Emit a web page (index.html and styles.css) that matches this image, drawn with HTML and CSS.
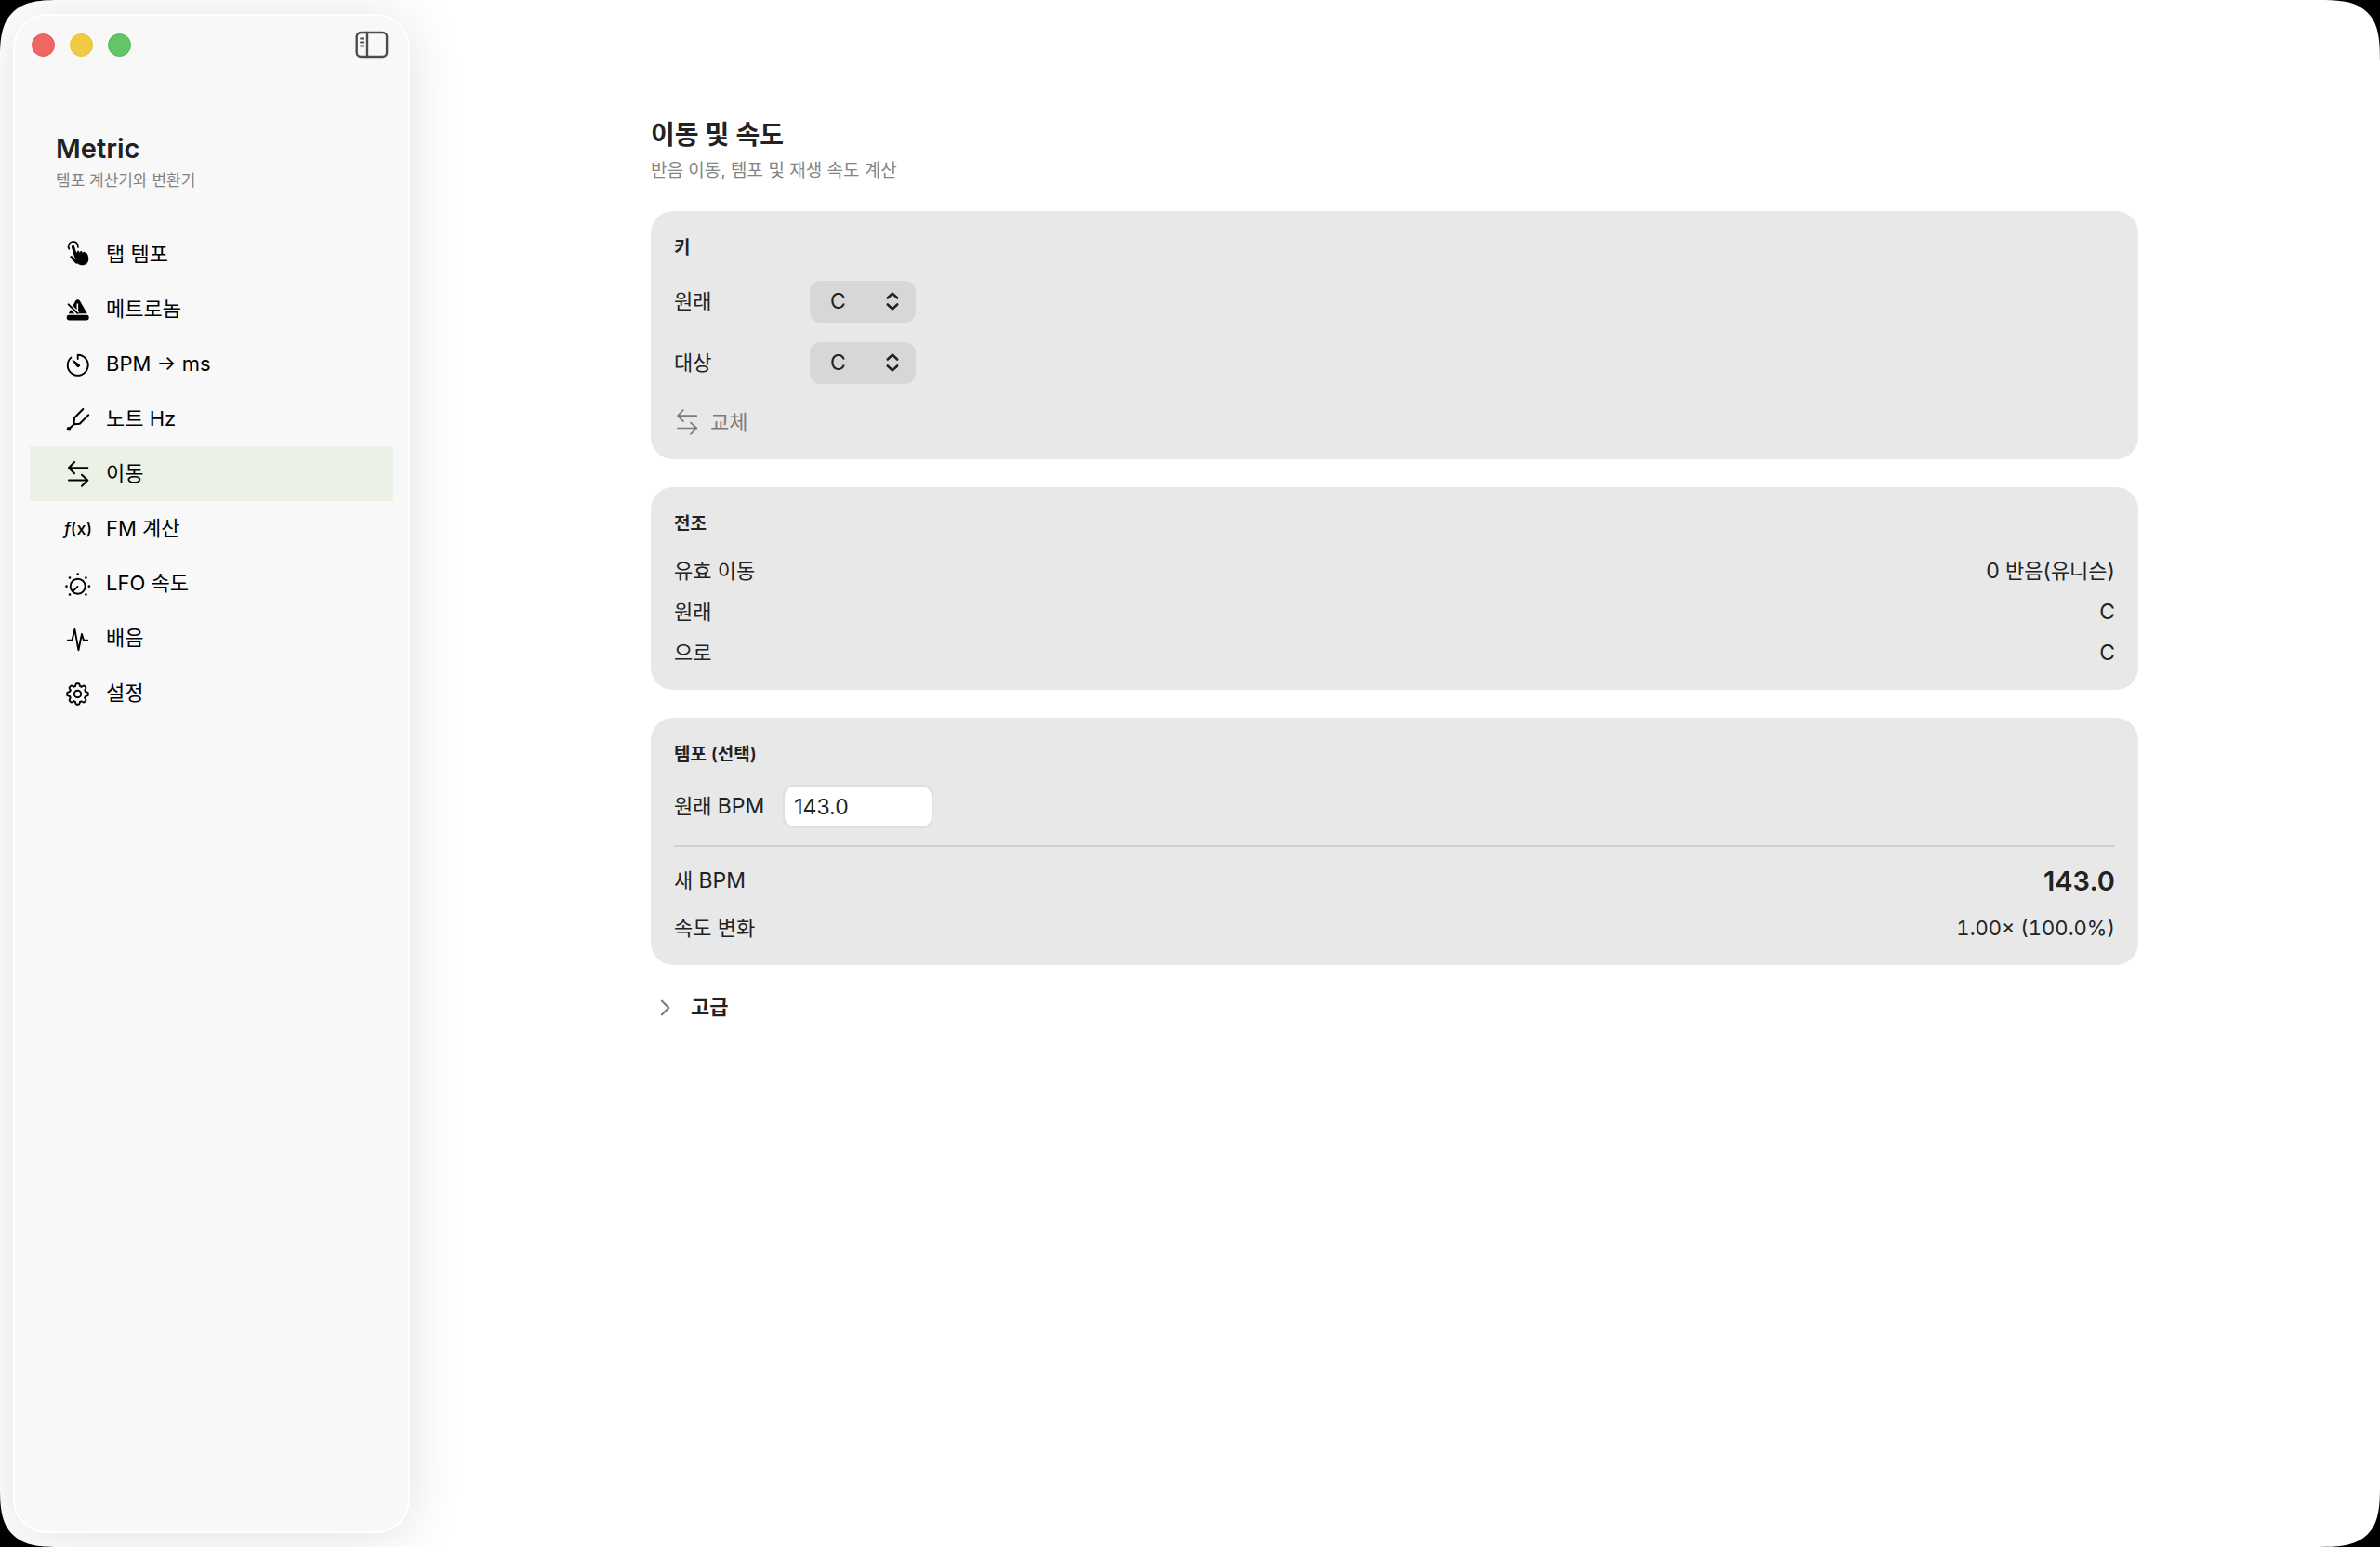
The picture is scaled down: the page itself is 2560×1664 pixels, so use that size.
FILE: index.html
```html
<!DOCTYPE html>
<html lang="ko">
<head>
<meta charset="utf-8">
<meta name="viewport" content="width=device-width, initial-scale=1">
<title>Metric</title>
<link rel="stylesheet" href="styles.css">
</head>
<body>
<div class="window">
  <aside class="sidebar">
    <div class="toolbar">
      <div class="lights">
        <button class="light light-close" type="button" aria-label="닫기"></button>
        <button class="light light-minimize" type="button" aria-label="최소화"></button>
        <button class="light light-zoom" type="button" aria-label="확대"></button>
      </div>
      <button class="toggle" type="button" aria-label="사이드바">
        <svg width="36" height="30" viewBox="0 0 36 30" fill="none" stroke="currentColor" stroke-width="2.4" stroke-linecap="round">
          <rect x="1.7" y="2" width="32.4" height="26" rx="4.5"/>
          <path d="M13 2v26"/>
          <path d="M6 8.500h3M6 12.500h3M6 16.500h3" stroke-width="1.8"/>
        </svg>
      </button>
    </div>
    <header class="brand">
      <h1 class="brand-name">Metric</h1>
      <p class="brand-note">템포 계산기와 변환기</p>
    </header>
    <nav class="nav">
      <a class="nav-item" href="#tap">
        <svg class="icon" viewBox="0 0 32 32" fill="none" stroke="currentColor" stroke-linecap="round" stroke-linejoin="round">
          <path d="M6.300 9.800A5.200 5.200 0 1 1 15.900 8" stroke-width="1.700"/>
          <path d="M10.500 7.500l3.600 12" stroke-width="3.200"/>
          <path d="M8.600 18.400l5.600 6" stroke-width="2.600"/>
          <path d="M13 15.500l2.200-3.300c.6-.8 1.600-.6 2 .2l.4 1.600.5-1.400c.7-1 1.900-.9 2.400.3l.4 1.600.4-1.200c.8-.9 2-.6 2.500.5l.3.700c.9-.4 1.700 0 2.100 1.100.7 1.800 1.300 4 1 6.100-.5 3.400-3.300 5.500-6.600 5.500-3.400 0-5.200-1.500-7.300-4z" fill="currentColor" stroke="none"/>
        </svg>
        <span>탭 템포</span>
      </a>
      <a class="nav-item" href="#metronome">
        <svg class="icon" viewBox="0 0 32 32" fill="currentColor">
          <rect x="3.700" y="21.800" width="24" height="5.700" rx="2.400"/>
          <path d="M5.800 20.300l7.200-13.300c1.200-2.200 4-2.200 5.200 0l7.600 13.300z"/>
          <path d="M15.300 18V9.500" stroke="#f8f8f8" stroke-width="1.600" fill="none"/>
          <path d="M4.500 9.300l11 11" stroke="#f8f8f8" stroke-width="4.600" fill="none"/>
          <path d="M5.600 10.300l9.600 9.600" stroke="currentColor" stroke-width="1.900" stroke-linecap="round"/>
        </svg>
        <span>메트로놈</span>
      </a>
      <a class="nav-item" href="#bpm-ms">
        <svg class="icon" viewBox="0 0 32 32" fill="none" stroke="currentColor" stroke-width="1.900" stroke-linecap="round" stroke-linejoin="round">
          <path d="M15.700 10V5.800a11 11 0 1 1-7.300 2.800"/>
          <path d="M10.300 11.200l6.800 4.800a1.500 1.500 0 0 1-2.300 2.200z" fill="currentColor" stroke-width="1"/>
        </svg>
        <span class="latin">BPM → ms</span>
      </a>
      <a class="nav-item" href="#note-hz">
        <svg class="icon" viewBox="0 0 32 32" fill="none" stroke="currentColor" stroke-width="2" stroke-linecap="round" stroke-linejoin="round">
          <path d="M21.300 5l-9.300 9.500-.5 6.700 6.200-.4 9.500-9.600M11.500 21.200L6 26.500"/>
          <circle cx="6" cy="26.300" r="1.300" fill="currentColor"/>
        </svg>
        <span>노트 <span class="latin">Hz</span></span>
      </a>
      <a class="nav-item is-active" href="#transpose" aria-current="page">
        <svg class="icon" viewBox="0 0 32 32" fill="none" stroke="currentColor" stroke-width="2" stroke-linecap="round" stroke-linejoin="round">
          <path d="M26.300 9.200H6M12 3L6 9.200l6 6M6 22.500h20.300M20 16.700l6.300 5.800-6.300 6.300"/>
        </svg>
        <span>이동</span>
      </a>
      <a class="nav-item" href="#fm">
        <span class="icon fx" aria-hidden="true"><i>f</i>(x)</span>
        <span><span class="latin">FM</span> 계산</span>
      </a>
      <a class="nav-item" href="#lfo">
        <svg class="icon" viewBox="0 0 32 32" fill="none" stroke="currentColor" stroke-width="1.900" stroke-linecap="round">
          <circle cx="15.700" cy="18.700" r="8"/>
          <path d="M11.200 23.200l4.300-4.300"/>
          <path stroke-width="2.700" d="M15.700 5.700h0M7 9.500h0M24.400 9.500h0M3.500 18.700h0M27.900 18.700h0M7 27.500h0M24.400 27.500h0"/>
        </svg>
        <span><span class="latin">LFO</span> 속도</span>
      </a>
      <a class="nav-item" href="#harmonics">
        <svg class="icon" viewBox="0 0 32 32" fill="none" stroke="currentColor" stroke-width="1.900" stroke-linecap="round" stroke-linejoin="round">
          <path d="M4.900 17.800h4.600l2.900-12 4 22.400L20 11l2 6.800h4.200"/>
        </svg>
        <span>배음</span>
      </a>
      <a class="nav-item" href="#settings">
        <svg class="icon" viewBox="0 0 32 32" fill="none" stroke="currentColor" stroke-width="1.900" stroke-linecap="round" stroke-linejoin="round">
          <defs><path id="tooth" d="M-2.600-8.400l.7-2.100q.3-.8 1-.8h1.800q.7 0 1 .8l.7 2.100 1.500.6"/></defs>
          <g transform="translate(15.500 16.500)">
            <use href="#tooth"/><use href="#tooth" transform="rotate(45)"/><use href="#tooth" transform="rotate(90)"/><use href="#tooth" transform="rotate(135)"/>
            <use href="#tooth" transform="rotate(180)"/><use href="#tooth" transform="rotate(225)"/><use href="#tooth" transform="rotate(270)"/><use href="#tooth" transform="rotate(315)"/>
            <circle r="3.700"/>
          </g>
        </svg>
        <span>설정</span>
      </a>
    </nav>
  </aside>

  <main class="main">
    <div class="content">
      <header class="page-head">
        <h2 class="page-title">이동 및 속도</h2>
        <p class="page-note">반음 이동, 템포 및 재생 속도 계산</p>
      </header>

      <section class="card card-key">
        <h3 class="card-title">키</h3>
        <div class="field">
          <label class="field-label" for="from-key">원래</label>
          <div class="picker">
            <select class="picker-select" id="from-key"><option>C</option><option>D</option><option>E</option><option>F</option><option>G</option><option>A</option><option>B</option></select>
            <svg class="picker-arrows" viewBox="0 0 16 22" fill="none" stroke="currentColor" stroke-width="2.600" stroke-linecap="round" stroke-linejoin="round"><path d="M2.800 7.500L8 2.600l5.200 4.900M2.800 14.500L8 19.400l5.200-4.900"/></svg>
          </div>
        </div>
        <div class="field">
          <label class="field-label" for="to-key">대상</label>
          <div class="picker">
            <select class="picker-select" id="to-key"><option>C</option><option>D</option><option>E</option><option>F</option><option>G</option><option>A</option><option>B</option></select>
            <svg class="picker-arrows" viewBox="0 0 16 22" fill="none" stroke="currentColor" stroke-width="2.600" stroke-linecap="round" stroke-linejoin="round"><path d="M2.800 7.500L8 2.600l5.200 4.900M2.800 14.500L8 19.400l5.200-4.900"/></svg>
          </div>
        </div>
        <button class="swap" type="button">
          <svg width="28" height="32" viewBox="2 0 28 32" fill="none" stroke="currentColor" stroke-width="1.700" stroke-linecap="round" stroke-linejoin="round">
            <path d="M26.300 9.200H6M12 3L6 9.200l6 6M6 22.500h20.300M20 16.700l6.300 5.800-6.300 6.300"/>
          </svg>
          <span>교체</span>
        </button>
      </section>

      <section class="card">
        <h3 class="card-title">전조</h3>
        <dl class="results">
          <div class="row"><dt>유효 이동</dt><dd><span class="latin">0</span> 반음<span class="latin">(</span>유니슨<span class="latin">)</span></dd></div>
          <div class="row"><dt>원래</dt><dd class="latin">C</dd></div>
          <div class="row"><dt>으로</dt><dd class="latin">C</dd></div>
        </dl>
      </section>

      <section class="card card-tempo">
        <h3 class="card-title">템포 (선택)</h3>
        <div class="field field-bpm">
          <label for="bpm">원래 <span class="latin">BPM</span></label>
          <input class="bpm-input" id="bpm" type="text" inputmode="decimal" value="143.0">
        </div>
        <hr class="rule">
        <div class="row row-large"><span>새 <span class="latin">BPM</span></span><output class="new-bpm" for="bpm">143.0</output></div>
        <div class="row"><span>속도 변화</span><output class="ratio" for="bpm">1.00× (100.0%)</output></div>
      </section>

      <button class="advanced" type="button" aria-expanded="false">
        <svg width="12" height="20" viewBox="0 0 12 20" fill="none" stroke="currentColor" stroke-width="2.200" stroke-linecap="round" stroke-linejoin="round"><path d="M2 2.700l7.300 7.300L2 17.300"/></svg>
        <span>고급</span>
      </button>
    </div>
  </main>
</div>
</body>
</html>
```
FILE: styles.css
```css
* {
  box-sizing: border-box;
}

body {
  margin: 0;
  background: #000;
  color: #222;
  font-family: Inter, "Noto Sans CJK KR", sans-serif;
  font-size: 22px;
  line-height: 31px;
}

h1, h2, h3, p, dl, dd {
  margin: 0;
}

button, input, select {
  font: inherit;
  color: inherit;
}

button {
  padding: 0;
  border: 0;
  background: none;
}

.latin {
  font-size: 23px;
}

.window {
  display: flex;
  min-height: 100vh;
  overflow: hidden;
  border-radius: 50px;
  background: #fff;
}

@supports (corner-shape: superellipse(1.6)) {
  .window {
    border-radius: 66px;
    corner-shape: superellipse(1.6);
  }
}

/* Sidebar */

.sidebar {
  flex: 0 0 427px;
  margin: 15px 0 15px 14px;
  padding: 0 18px;
  border: 2px solid #fff;
  border-radius: 36px;
  background: #f8f8f8;
  box-shadow: 0 4px 60px rgba(0, 0, 0, 0.12);
}

.toolbar {
  display: flex;
  align-items: center;
  justify-content: space-between;
  height: 62px;
  padding-right: 3px;
}

.lights {
  display: flex;
  gap: 16px;
}

.light {
  width: 25px;
  height: 25px;
  border: 1px solid;
  border-radius: 50%;
}

.light-close {
  border-color: #e85654;
  background: #ee6765;
}

.light-minimize {
  border-color: #edbf2c;
  background: #f2c944;
}

.light-zoom {
  border-color: #4fba50;
  background: #65c368;
}

.toggle {
  height: 30px;
  color: #4c4c4c;
}

.toggle svg {
  display: block;
}

.brand {
  padding: 61px 26px 36px;
}

.brand-name {
  font-size: 29px;
  font-weight: 600;
  line-height: 40px;
}

.brand-note {
  color: #828282;
  font-size: 17px;
  line-height: 28px;
}

.nav {
  display: flex;
  flex-direction: column;
  margin: 0 -2px;
}

.nav-item {
  display: flex;
  align-items: center;
  gap: 14px;
  height: 59px;
  padding-left: 36px;
  color: #000;
  text-decoration: none;
}

.nav-item .latin {
  font-size: 22px;
}

.nav-item.is-active {
  background: #ebf1e5;
}

.icon {
  flex: none;
  width: 32px;
  height: 32px;
}

.fx {
  display: flex;
  align-items: center;
  justify-content: center;
  font-size: 18px;
  font-weight: 500;
}

/* Main column */

.main {
  flex: 1;
  min-width: 0;
  padding: 125px 41px 40px 40px;
}

.content {
  display: flex;
  flex-direction: column;
  gap: 30px;
  max-width: 1600px;
  margin: 0 auto;
}

.page-head {
  display: flex;
  flex-direction: column;
  gap: 6px;
}

.page-title {
  font-size: 28px;
  font-weight: 600;
  line-height: 40px;
}

.page-note {
  color: #858585;
  font-size: 19px;
  line-height: 26px;
}

.card {
  display: flex;
  flex-direction: column;
  gap: 20px;
  padding: 24px 25px;
  border-radius: 24px;
  background: #e8e8e8;
}

.card-key {
  gap: 21px;
}

.card-tempo {
  gap: 18px;
}

.card-title {
  padding-top: 2px;
  font-size: 19px;
  font-weight: 600;
  line-height: 28px;
}

.field {
  display: flex;
  align-items: center;
}

.field-label {
  width: 146px;
}

.picker {
  position: relative;
}

.picker-select {
  display: block;
  width: 114px;
  height: 45px;
  padding: 0 22px;
  border: 0;
  border-radius: 12px;
  background: #d7d7d7;
  appearance: none;
  font-size: 23px;
}

.picker-arrows {
  position: absolute;
  top: 11px;
  right: 17px;
  width: 16px;
  height: 22px;
  pointer-events: none;
}

.swap {
  display: flex;
  align-items: center;
  align-self: flex-start;
  gap: 11px;
  padding-top: 4px;
  color: #7b7b7b;
}

.swap svg {
  display: block;
}

.results {
  display: flex;
  flex-direction: column;
  gap: 13px;
  padding-top: 1px;
}

.row {
  display: flex;
  align-items: center;
  justify-content: space-between;
}

.row-large {
  height: 36px;
}

.field-bpm {
  gap: 20px;
}

.bpm-input {
  width: 162px;
  height: 47px;
  padding: 0 10px;
  border: 2px solid #dedede;
  border-radius: 12px;
  background: #fff;
  font-size: 23px;
}

.rule {
  width: 100%;
  height: 2px;
  margin: 0;
  border: 0;
  background: #d0d0d0;
}

.new-bpm {
  font-size: 29px;
  font-weight: 600;
}

.ratio {
  font-variant-numeric: tabular-nums;
}

.advanced {
  display: flex;
  align-items: center;
  align-self: flex-start;
  gap: 21px;
  padding-left: 10px;
  font-weight: 600;
}

.advanced svg {
  color: #7b7b7b;
}
```
